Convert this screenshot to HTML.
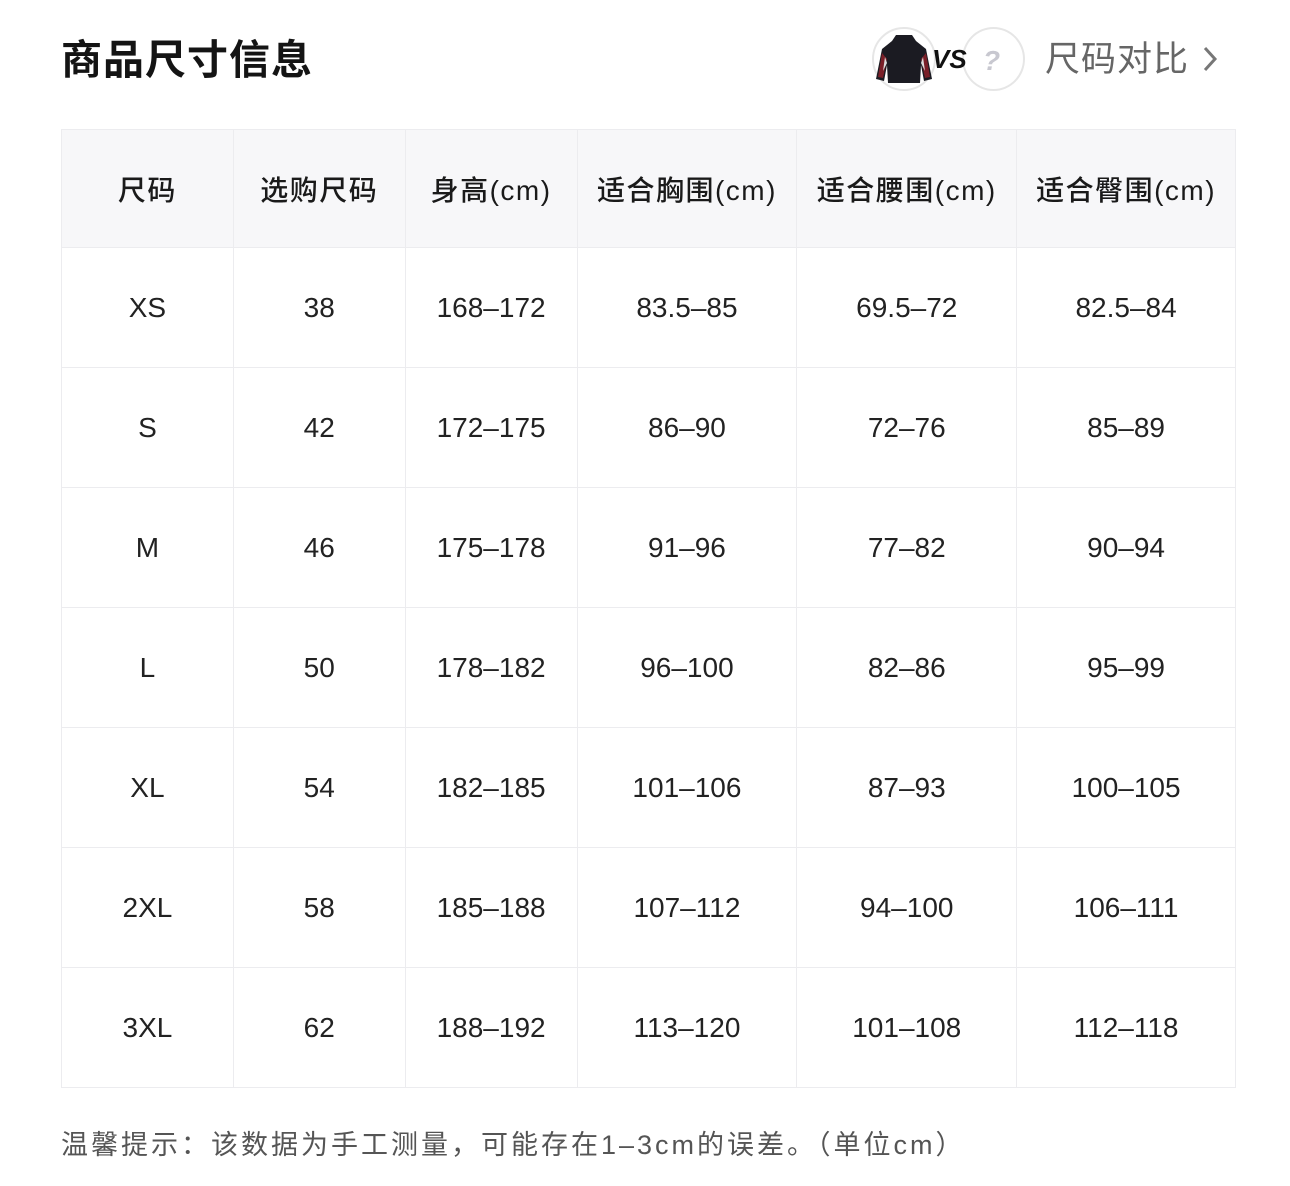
<!DOCTYPE html>
<html><head><meta charset="utf-8"><style>
*{margin:0;padding:0;box-sizing:border-box}
body{width:1290px;height:1186px;background:#fff;font-family:"Liberation Sans","Noto Sans CJK SC",sans-serif;position:relative;overflow:hidden}
.title{position:absolute;left:61px;top:34px;font-size:41px;font-weight:bold;color:#141414;line-height:52px;letter-spacing:1px}
table{position:absolute;left:61px;top:129px;border-collapse:collapse;width:1175px}
td{border:1.5px solid #ececef;text-align:center;height:120px;font-size:28px;color:#222;padding:0}
tr.h td{background:#f7f7f9;height:118px;font-weight:500;color:#1a1a1a;letter-spacing:1.5px}
.foot{position:absolute;left:61px;top:1126px;font-size:27px;color:#555;line-height:38px;letter-spacing:3px;white-space:nowrap}
.circ{position:absolute;border:2px solid #e6e6e6;border-radius:50%;background:#fff}
.cmp{position:absolute;left:1045px;top:38px;font-size:35px;color:#666;line-height:44px;letter-spacing:1px}
</style></head><body>
<div class="title">商品尺寸信息</div>
<div class="circ" style="left:872px;top:27px;width:64px;height:64px"></div>
<div class="circ" style="left:962px;top:27px;width:63px;height:64px"></div>
<svg style="position:absolute;left:872px;top:27px" width="160" height="64" viewBox="0 0 160 64">
<path d="M24 8 L40 8 L44 14 L54 22 L60 52 L52 54 L49 38 L48 56 L16 56 L15 38 L12 54 L4 52 L10 22 L20 14 Z" fill="#1b1b22"/>
<path d="M10 26 L6 50 L11 51 L15 32 Z" fill="#7a1f28"/>
<path d="M54 26 L58 50 L53 51 L49 32 Z" fill="#7a1f28"/>
<path d="M13 30 L11 44 L15 36 Z M51 30 L53 44 L49 36 Z" fill="#ddd"/>
<text x="60" y="41" font-family="Liberation Sans" font-weight="bold" font-style="italic" font-size="26" fill="#111">VS</text>
<text x="111" y="43" font-family="Liberation Sans" font-weight="bold" font-style="italic" font-size="28" fill="#c8c8d0">?</text>
</svg>
<div class="cmp">尺码对比</div>
<svg style="position:absolute;left:1200px;top:45px" width="20" height="30" viewBox="0 0 20 30"><path d="M5 3 L15 14 L5 25" fill="none" stroke="#777" stroke-width="3"/></svg>
<table>
<colgroup><col style="width:172px"><col style="width:172px"><col style="width:172px"><col style="width:220px"><col style="width:220px"><col style="width:219px"></colgroup>
<tr class="h"><td>尺码</td><td>选购尺码</td><td>身高(cm)</td><td>适合胸围(cm)</td><td>适合腰围(cm)</td><td>适合臀围(cm)</td></tr>
<tr><td>XS</td><td>38</td><td>168–172</td><td>83.5–85</td><td>69.5–72</td><td>82.5–84</td></tr>
<tr><td>S</td><td>42</td><td>172–175</td><td>86–90</td><td>72–76</td><td>85–89</td></tr>
<tr><td>M</td><td>46</td><td>175–178</td><td>91–96</td><td>77–82</td><td>90–94</td></tr>
<tr><td>L</td><td>50</td><td>178–182</td><td>96–100</td><td>82–86</td><td>95–99</td></tr>
<tr><td>XL</td><td>54</td><td>182–185</td><td>101–106</td><td>87–93</td><td>100–105</td></tr>
<tr><td>2XL</td><td>58</td><td>185–188</td><td>107–112</td><td>94–100</td><td>106–111</td></tr>
<tr><td>3XL</td><td>62</td><td>188–192</td><td>113–120</td><td>101–108</td><td>112–118</td></tr>
</table>
<div class="foot">温馨提示：该数据为手工测量，可能存在1–3cm的误差。（单位cm）</div>
</body></html>
